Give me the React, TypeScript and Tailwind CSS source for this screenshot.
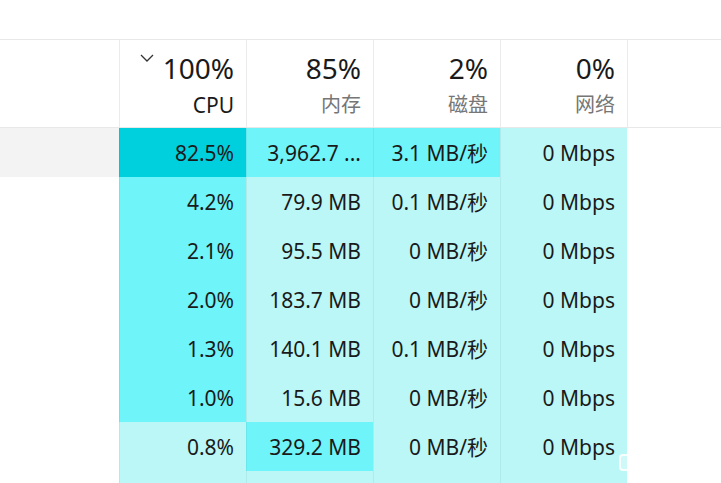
import React from "react";

const DARK = "bg-[#00d0de]";
const MED = "bg-[#6ff4f9]";
const LIGHT = "bg-[#bbf7f7]";

type Row = { cells: [string, string][]; sel?: boolean };

const rows: Row[] = [
  { sel: true, cells: [["82.5%", DARK], ["3,962.7 ...", MED], ["3.1 MB/秒", MED], ["0 Mbps", LIGHT]] },
  { cells: [["4.2%", MED], ["79.9 MB", LIGHT], ["0.1 MB/秒", LIGHT], ["0 Mbps", LIGHT]] },
  { cells: [["2.1%", MED], ["95.5 MB", LIGHT], ["0 MB/秒", LIGHT], ["0 Mbps", LIGHT]] },
  { cells: [["2.0%", MED], ["183.7 MB", LIGHT], ["0 MB/秒", LIGHT], ["0 Mbps", LIGHT]] },
  { cells: [["1.3%", MED], ["140.1 MB", LIGHT], ["0.1 MB/秒", LIGHT], ["0 Mbps", LIGHT]] },
  { cells: [["1.0%", MED], ["15.6 MB", LIGHT], ["0 MB/秒", LIGHT], ["0 Mbps", LIGHT]] },
  { cells: [["0.8%", LIGHT], ["329.2 MB", MED], ["0 MB/秒", LIGHT], ["0 Mbps", LIGHT]] },
  { cells: [["", LIGHT], ["", LIGHT], ["", LIGHT], ["", LIGHT]] },
];

const headers = [
  { v: "100%", l: "CPU", sorted: true },
  { v: "85%", l: "内存" },
  { v: "2%", l: "磁盘" },
  { v: "0%", l: "网络" },
];

export default function App() {
  return (
    <div
      className="relative w-[721px] h-[483px] overflow-hidden bg-white text-[#1a1a1a]"
      style={{ fontFamily: '"Segoe UI", "Noto Sans", "Noto Sans CJK SC", sans-serif' }}
    >
      <div className="h-[39px]" />
      <div className="flex h-[89px] border-t border-b border-[#e8e8e8]">
        <div className="w-[119px] shrink-0" />
        {headers.map((h, i) => (
          <div
            key={i}
            className={`w-[127px] shrink-0 border-l border-[#ebebeb] flex flex-col items-end pr-[12px] pt-[10px] ${i === 3 ? "w-[128px] border-r" : ""}`}
          >
            <div className="flex items-start">
              {h.sorted && (
                <svg width="14" height="8" viewBox="0 0 14 8" className="mt-[4px] mr-[9px]">
                  <path d="M1 1 L7 7 L13 1" fill="none" stroke="#333" strokeWidth="1.3" />
                </svg>
              )}
              <span className="text-[28px] leading-[36px]">{h.v}</span>
            </div>
            <span
              className={`mt-[5px] leading-[28px] ${h.sorted ? "text-[21px] text-[#1a1a1a]" : "text-[20px] text-[#767676]"}`}
            >
              {h.l}
            </span>
          </div>
        ))}
      </div>
      {rows.map((r, ri) => (
        <div key={ri} className="flex h-[49px]">
          <div className={`w-[119px] shrink-0 ${r.sel ? "bg-[#f3f3f3]" : ""}`} />
          {r.cells.map(([t, bg], ci) => (
            <div
              key={ci}
              className={`w-[127px] shrink-0 border-l border-black/[0.05] flex items-center justify-end pr-[12px] text-[21px] leading-[28px] ${bg}`}
            >
              {t}
            </div>
          ))}
        </div>
      ))}
      <div className="absolute left-[619px] top-[454px] w-[14px] h-[17px] rounded-[4px] border-2 border-white/80 bg-white/30" />
    </div>
  );
}
